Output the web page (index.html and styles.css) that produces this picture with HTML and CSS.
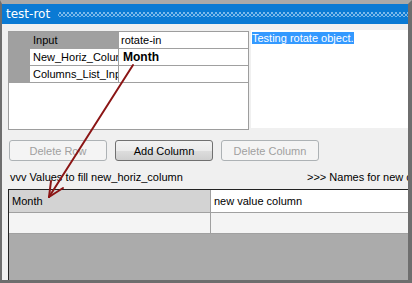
FILE: index.html
```html
<!DOCTYPE html>
<html>
<head>
<meta charset="utf-8">
<link rel="stylesheet" href="styles.css">
</head>
<body>
<div class="window">
  <div class="titlebar"><span class="title">test-rot</span><span class="dots"></span></div>
  <div class="client">
    <div class="top">
      <div class="propgrid">
        <div class="prow selected"><div class="gut"></div><div class="plabel">Input</div><div class="pval">rotate-in</div></div>
        <div class="prow"><div class="gut"></div><div class="plabel">New_Horiz_Colun</div><div class="pval bold">Month</div></div>
        <div class="prow"><div class="gut"></div><div class="plabel">Columns_List_Inp</div><div class="pval"></div></div>
      </div>
      <div class="textbox"><span class="sel">Testing rotate object.</span></div>
    </div>
    <div class="buttons">
      <button class="btn disabled">Delete Row</button>
      <button class="btn">Add Column</button>
      <button class="btn disabled">Delete Column</button>
    </div>
    <div class="labels">
      <span class="left">vvv Values to fill new_horiz_column</span>
      <span class="right">&gt;&gt;&gt; Names for new columns</span>
    </div>
    <div class="datagrid">
      <div class="drow first"><div class="dcell key">Month</div><div class="dcell val">new value column</div></div>
      <div class="drow second"><div class="dcell key"></div><div class="dcell val"></div></div>
    </div>
  </div>
  <svg class="arrow" width="412" height="283" viewBox="0 0 412 283">
    <g stroke="#8b1515" stroke-width="2" fill="none" stroke-linecap="round">
      <line x1="133" y1="65" x2="49" y2="197"/>
      <line x1="49" y1="197" x2="51" y2="181"/>
      <line x1="49" y1="197" x2="63" y2="188"/>
    </g>
  </svg>
</div>
</body>
</html>
```
FILE: styles.css
```css
* { box-sizing: border-box; }
html, body { margin: 0; padding: 0; }
body { width: 412px; height: 283px; overflow: hidden; background: #f0f0f0; font-family: "Liberation Sans", Arial, sans-serif; font-size: 11px; color: #000; }
.window { position: relative; width: 412px; height: 283px; border-top: 4px solid #a9a9a9; border-left: 2px solid #6e6e6e; border-right: 4px solid #6e6e6e; border-bottom: 3px solid #6e6e6e; background: #f0f0f0; display: flex; flex-direction: column; overflow: hidden; }
.titlebar { height: 20px; background: #0a7ad4; display: flex; align-items: center; padding-left: 4px; flex: none; }
.title { color: #fff; font-family: "DejaVu Sans", "Liberation Sans", sans-serif; font-size: 12px; }
.dots { flex: 1; height: 5px; margin-left: 8px; margin-top: 1px; background-image: radial-gradient(circle, #7ab8ea 0.8px, transparent 1px), radial-gradient(circle, #7ab8ea 0.8px, transparent 1px); background-size: 4px 4px, 4px 4px; background-position: 0 -1px, 2px 1px; }
.client { flex: 1; display: flex; flex-direction: column; padding: 6px 0 0 6px; min-height: 0; }
.top { display: flex; gap: 2px; height: 99px; flex: none; }
.propgrid { width: 241px; height: 99px; margin-top: 1px; border: 1px solid #9d9d9d; background: #fff; }
.prow { display: flex; height: 17px; }
.gut { width: 21px; background: #a0a0a0; }
.plabel { width: 88px; padding-left: 3px; border-bottom: 1px solid #a0a0a0; line-height: 16px; white-space: nowrap; overflow: hidden; }
.selected .plabel { background: #a0a0a0; border-bottom-color: #a0a0a0; }
.pval { flex: 1; border-left: 1px solid #a0a0a0; border-bottom: 1px solid #a0a0a0; padding-left: 2px; line-height: 16px; }
.bold { font-weight: bold; font-size: 12px; padding-left: 4px; }
.textbox { flex: 1; height: 98px; background: #fff; padding: 2px 0 0 1px; line-height: 13px; }
.sel { background: #3399ff; color: #fff; }
.buttons { display: flex; gap: 8px; margin-top: 11px; padding-left: 1px; flex: none; }
.btn { width: 98px; height: 21px; border-radius: 3px; font-family: "Liberation Sans", Arial, sans-serif; font-size: 11px; border: 1px solid #707070; background: linear-gradient(#f2f2f2, #ebebeb 50%, #dddddd 51%, #cfcfcf); color: #000; padding: 0; }
.btn.disabled { border-color: #adb2b5; background: #f4f4f4; color: #a0a0a0; }
.labels { display: flex; margin-top: 10px; padding-left: 2px; height: 13px; line-height: 13px; white-space: nowrap; flex: none; overflow: hidden; }
.labels .left { flex: none; width: 297px; }
.labels .right { flex: none; }
.datagrid { flex: 1; margin-top: 5px; border-top: 1px solid #222; border-left: 1px solid #222; background: #ababab; }
.drow { display: flex; }
.first { height: 23px; }
.second { height: 21px; }
.dcell { border-bottom: 1px solid #a0a0a0; line-height: 22px; padding-left: 3px; white-space: nowrap; }
.key { width: 202px; border-right: 1px solid #a0a0a0; }
.val { flex: 1; }
.first .key { background: #d3d3d3; }
.first .val { background: #fff; }
.second .dcell { background: #f4f4f4; }
.arrow { position: absolute; left: -2px; top: -4px; pointer-events: none; }
```
